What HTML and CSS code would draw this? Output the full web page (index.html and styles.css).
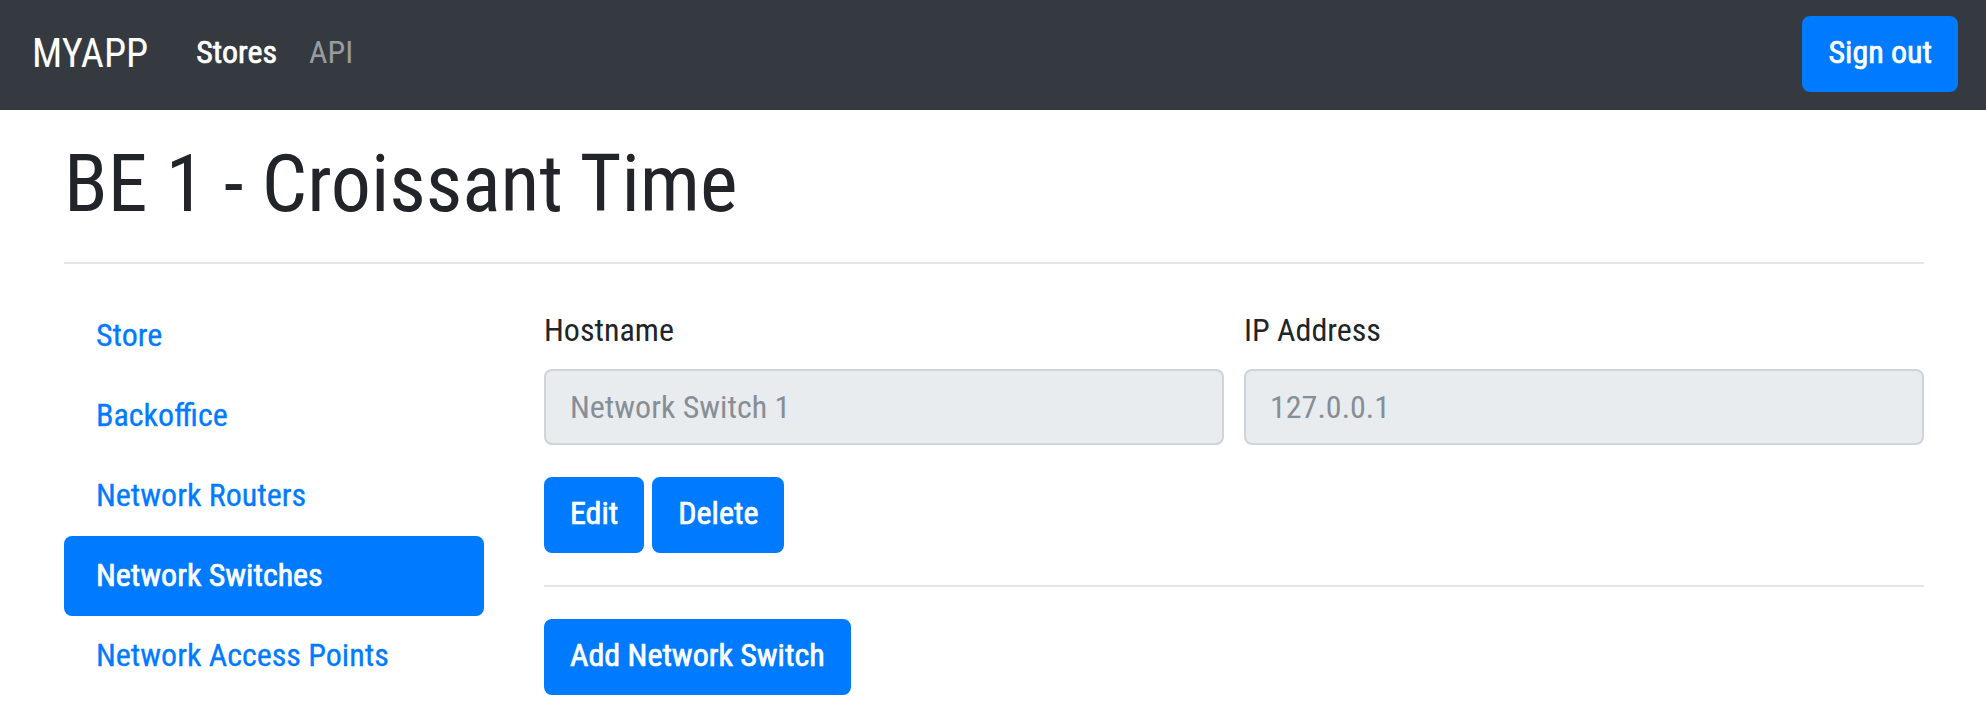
FILE: index.html
```html
<!DOCTYPE html>
<html lang="en">
<head>
<meta charset="utf-8">
<title>BE 1 - Croissant Time</title>
<link rel="stylesheet" href="styles.css">
</head>
<body>
<nav class="navbar">
  <a class="brand" href="#">MYAPP</a>
  <ul class="navbar-nav">
    <li><a class="nav-link active" href="#">Stores</a></li>
    <li><a class="nav-link" href="#">API</a></li>
  </ul>
  <button class="btn btn-signout" type="button">Sign out</button>
</nav>

<main class="container">
  <h1 class="page-title">BE 1 - Croissant Time</h1>
  <hr class="divider">
  <div class="layout">
    <ul class="side-nav">
      <li><a class="pill" href="#">Store</a></li>
      <li><a class="pill" href="#">Backoffice</a></li>
      <li><a class="pill" href="#">Network Routers</a></li>
      <li><a class="pill pill-active" href="#">Network Switches</a></li>
      <li><a class="pill" href="#">Network Access Points</a></li>
    </ul>
    <section class="content">
      <div class="form-row">
        <div class="field">
          <label class="field-label">Hostname</label>
          <input class="field-input" type="text" value="Network Switch 1" readonly>
        </div>
        <div class="field">
          <label class="field-label">IP Address</label>
          <input class="field-input" type="text" value="127.0.0.1" readonly>
        </div>
      </div>
      <div class="actions">
        <button class="btn btn-primary" type="button">Edit</button>
        <button class="btn btn-primary" type="button">Delete</button>
      </div>
      <hr class="divider divider-inner">
      <button class="btn btn-primary" type="button">Add Network Switch</button>
    </section>
  </div>
</main>
</body>
</html>
```
FILE: styles.css
```css
* { box-sizing: border-box; }

html, body {
  margin: 0;
  padding: 0;
  background: #fff;
}

body {
  font-family: "Roboto Condensed", Roboto, "Liberation Sans", sans-serif;
  font-stretch: 75%;
  font-size: 32px;
  line-height: 48px;
  color: #212529;
}

a { text-decoration: none; }
ul { list-style: none; margin: 0; padding: 0; }

/* navbar */
.navbar {
  display: flex;
  align-items: center;
  height: 110px;
  padding: 0 28px 0 32px;
  background: #343a40;
}
.brand {
  font-size: 40px;
  line-height: 60px;
  color: #fff;
  margin-right: 32px;
  padding-bottom: 2px;
}
.navbar-nav {
  display: flex;
  padding-bottom: 6px;
}
.nav-link {
  display: block;
  padding: 0 16px;
  color: rgba(255, 255, 255, 0.5);
}
.nav-link.active {
  color: #fff;
  -webkit-text-stroke: 0.7px #fff;
}

/* buttons */
.btn {
  font: inherit;
  font-size: 32px;
  line-height: 48px;
  padding: 10px 24px 14px;
  border: 2px solid #007bff;
  border-radius: 8px;
  background: #007bff;
  color: #fff;
  -webkit-text-stroke: 0.7px #fff;
  cursor: pointer;
}
.btn-signout {
  margin-left: auto;
  margin-bottom: 3px;
}

/* page */
.container {
  width: 1860px;
  margin: 0 62px 0 64px;
}
.page-title {
  margin: 0;
  padding-top: 26px;
  padding-bottom: 1px;
  font-size: 80px;
  line-height: 96px;
  font-weight: 400;
  color: #212529;
}
.divider {
  height: 0;
  margin: 29px 0 32px;
  border: 0;
  border-top: 2px solid rgba(0, 0, 0, 0.1);
}
.divider-inner { margin: 32px 0; }

.layout {
  display: grid;
  grid-template-columns: 420px 1fr;
  column-gap: 60px;
}

.pill {
  display: block;
  padding: 15px 32px 17px;
  border-radius: 8px;
  color: #007bff;
  -webkit-text-stroke: 0.3px #007bff;
}
.pill-active {
  background: #007bff;
  color: #fff;
  -webkit-text-stroke: 0.7px #fff;
}

.form-row {
  display: grid;
  grid-template-columns: 1fr 1fr;
  column-gap: 20px;
}
.field { margin-bottom: 32px; }
.field-label {
  display: block;
  padding-top: 10px;
  margin-bottom: 15px;
}
.field-input {
  display: block;
  width: 100%;
  height: 76px;
  padding: 12px 24px;
  font: inherit;
  font-size: 32px;
  line-height: 48px;
  color: #868e96;
  background: #e9ecef;
  border: 2px solid #ced4da;
  border-radius: 8px;
  outline: none;
}

.actions {
  display: flex;
  gap: 8px;
}
```
